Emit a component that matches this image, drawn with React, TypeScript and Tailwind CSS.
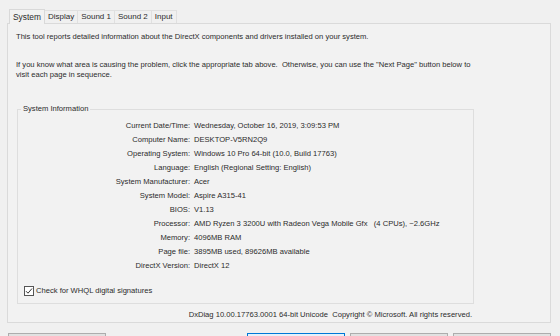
import React from 'react';

const rows: [string, string][] = [
  ['Current Date/Time:', 'Wednesday, October 16, 2019, 3:09:53 PM'],
  ['Computer Name:', 'DESKTOP-V5RN2Q9'],
  ['Operating System:', 'Windows 10 Pro 64-bit (10.0, Build 17763)'],
  ['Language:', 'English (Regional Setting: English)'],
  ['System Manufacturer:', 'Acer'],
  ['System Model:', 'Aspire A315-41'],
  ['BIOS:', 'V1.13'],
  ['Processor:', 'AMD Ryzen 3 3200U with Radeon Vega Mobile Gfx   (4 CPUs), ~2.6GHz'],
  ['Memory:', '4096MB RAM'],
  ['Page file:', '3895MB used, 89626MB available'],
  ['DirectX Version:', 'DirectX 12'],
];

const tabs = ['System', 'Display', 'Sound 1', 'Sound 2', 'Input'];

export default function App() {
  return (
    <div
      className="w-[560px] h-[336px] overflow-hidden bg-[#f0f0f0] text-[#2b2b2b] text-[7.6px]"
      style={{ fontFamily: '"Liberation Sans", Arial, sans-serif' }}
    >
      {/* tab strip */}
      <div className="flex items-end pt-[8px] pl-[9px] h-[23px]">
        {tabs.map((t, i) =>
          i === 0 ? (
            <div
              key={t}
              className="relative z-10 h-[15px] px-[3px] flex items-center bg-[#f2f2f2] border border-b-0 border-[#d9d9d9] text-[8.4px] -mb-px"
            >
              {t}
            </div>
          ) : (
            <div
              key={t}
              className="h-[13px] px-[3px] flex items-center border border-l-0 border-b-0 border-[#e0e0e0] text-[8px]"
            >
              {t}
            </div>
          )
        )}
      </div>

      {/* tab panel */}
      <div className="mx-[7px] mr-[9px] h-[300px] border border-[#dadada] bg-[#f2f2f2] flex flex-col">
        <p className="mt-[8px] ml-[8px] leading-[10px]">
          This tool reports detailed information about the DirectX components and drivers installed on your system.
        </p>
        <p className="mt-[18px] ml-[8px] leading-[9.5px] w-[462px]">
          If you know what area is causing the problem, click the appropriate tab above.&nbsp; Otherwise, you can use the "Next Page" button below to visit each page in sequence.
        </p>

        {/* group box */}
        <div className="relative ml-[9px] mt-[30px] w-[457px] h-[195px] border border-[#dedede]">
          <span className="absolute -top-[6px] left-[3px] px-[2px] bg-[#f2f2f2] leading-[10px]">
            System Information
          </span>
          <div className="grid grid-cols-[172px_1fr] gap-x-[4px] mt-[9px]">
            {rows.map(([k, v]) => (
              <React.Fragment key={k}>
                <div className="text-right leading-[14px]">{k}</div>
                <div className="leading-[14px] whitespace-pre">{v}</div>
              </React.Fragment>
            ))}
          </div>
          <label className="flex items-center gap-[2px] ml-[6px] mt-[13px] leading-[10px]">
            <span className="w-[10px] h-[10px] border border-[#555] bg-white flex items-center justify-center">
              <svg width="8" height="8" viewBox="0 0 8 8">
                <path d="M1 4.2 L3 6.2 L7 1.5" fill="none" stroke="#333" strokeWidth="1" />
              </svg>
            </span>
            Check for WHQL digital signatures
          </label>
        </div>

        <div className="w-[464px] text-right mt-[6px] leading-[10px]">
          DxDiag 10.00.17763.0001 64-bit Unicode&nbsp; Copyright © Microsoft. All rights reserved.
        </div>
      </div>

      {/* buttons */}
      <div className="flex mt-[10px] pl-[8px] h-[20px]">
        <div className="w-[98px] h-[20px] border border-[#adadad] bg-[#e1e1e1]" />
        <div className="w-[98px] h-[20px] ml-[141px] border border-[#0078d7] bg-[#e5f1fb]" />
        <div className="w-[98px] h-[20px] ml-[5px] border border-[#adadad] bg-[#e1e1e1]" />
        <div className="w-[98px] h-[20px] ml-[5px] border border-[#adadad] bg-[#e1e1e1]" />
      </div>
    </div>
  );
}
